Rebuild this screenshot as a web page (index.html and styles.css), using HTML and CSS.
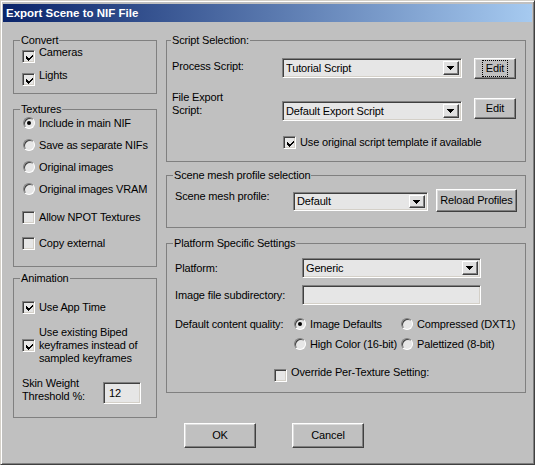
FILE: index.html
```html
<!DOCTYPE html>
<html>
<head>
<meta charset="utf-8">
<title>Export Scene to NIF File</title>
<link rel="stylesheet" href="styles.css">
</head>
<body>
<div class="window">
  <div class="titlebar"><span class="title">Export Scene to NIF File</span></div>
  <div class="content">
    <div class="col-left">
      <fieldset class="gb gb-convert">
        <legend>Convert</legend>
        <div class="gb-body pad8">
          <div class="row-top first-convert"><span class="cb on"><svg viewBox="0 0 7 7" width="7" height="7"><path d="M0 2 L2.5 4.5 L7 0 L7 2.5 L2.5 7 L0 4.5 Z"/></svg></span><span class="lbl">Cameras</span></div>
          <div class="row-top"><span class="cb on"><svg viewBox="0 0 7 7" width="7" height="7"><path d="M0 2 L2.5 4.5 L7 0 L7 2.5 L2.5 7 L0 4.5 Z"/></svg></span><span class="lbl">Lights</span></div>
        </div>
      </fieldset>
      <fieldset class="gb gb-textures">
        <legend>Textures</legend>
        <div class="gb-body pad8">
          <div class="row22 first-tex"><span class="rb on"></span><span class="lbl">Include in main NIF</span></div>
          <div class="row22"><span class="rb"></span><span class="lbl">Save as separate NIFs</span></div>
          <div class="row22"><span class="rb"></span><span class="lbl">Original images</span></div>
          <div class="row22"><span class="rb"></span><span class="lbl">Original images VRAM</span></div>
          <div class="row22 mt6"><span class="cb"></span><span class="lbl">Allow NPOT Textures</span></div>
          <div class="row22 mt4"><span class="cb"></span><span class="lbl">Copy external</span></div>
        </div>
      </fieldset>
      <fieldset class="gb gb-anim">
        <legend>Animation</legend>
        <div class="gb-body pad8">
          <div class="row22 mt11"><span class="cb on"><svg viewBox="0 0 7 7" width="7" height="7"><path d="M0 2 L2.5 4.5 L7 0 L7 2.5 L2.5 7 L0 4.5 Z"/></svg></span><span class="lbl">Use App Time</span></div>
          <div class="row-center mt8"><span class="cb on"><svg viewBox="0 0 7 7" width="7" height="7"><path d="M0 2 L2.5 4.5 L7 0 L7 2.5 L2.5 7 L0 4.5 Z"/></svg></span><span class="lbl">Use existing Biped<br>keyframes instead of<br>sampled keyframes</span></div>
          <div class="row-top mt12"><span class="lbl skin-lbl">Skin Weight<br>Threshold %:</span><span class="field skin-field">12</span></div>
        </div>
      </fieldset>
    </div>
    <div class="col-right">
      <fieldset class="gb gb-script">
        <legend class="legend-narrow">Script Selection:</legend>
        <div class="gb-body pad5">
          <div class="row-top mt11">
            <span class="lbl script-lbl mt2">Process Script:</span>
            <div class="combo w180"><span class="combo-text">Tutorial Script</span><span class="combo-btn"><svg viewBox="0 0 7 4" width="7" height="4"><path d="M0 0 H7 L3.5 4 Z"/></svg></span></div>
            <div class="btn edit focus"><span class="focus-ring">Edit</span></div>
          </div>
          <div class="row-top mt12">
            <span class="lbl script-lbl">File Export<br>Script:</span>
            <div class="combo w180 mt10"><span class="combo-text">Default Export Script</span><span class="combo-btn"><svg viewBox="0 0 7 4" width="7" height="4"><path d="M0 0 H7 L3.5 4 Z"/></svg></span></div>
            <div class="btn edit mt7">Edit</div>
          </div>
          <div class="row13 mt15 indent-tmpl"><span class="cb on"><svg viewBox="0 0 7 7" width="7" height="7"><path d="M0 2 L2.5 4.5 L7 0 L7 2.5 L2.5 7 L0 4.5 Z"/></svg></span><span class="lbl">Use original script template if available</span></div>
        </div>
      </fieldset>
      <fieldset class="gb gb-mesh">
        <legend>Scene mesh profile selection</legend>
        <div class="gb-body pad8">
          <div class="row-top mt7">
            <span class="lbl mesh-lbl mt1">Scene mesh profile:</span>
            <div class="combo w135 h19 mt3"><span class="combo-text">Default</span><span class="combo-btn"><svg viewBox="0 0 7 4" width="7" height="4"><path d="M0 0 H7 L3.5 4 Z"/></svg></span></div>
            <div class="btn reload">Reload Profiles</div>
          </div>
        </div>
      </fieldset>
      <fieldset class="gb gb-platform">
        <legend>Platform Specific Settings</legend>
        <div class="gb-body pad8">
          <div class="row-center mt8">
            <span class="lbl plat-lbl">Platform:</span>
            <div class="combo w179"><span class="combo-text">Generic</span><span class="combo-btn"><svg viewBox="0 0 7 4" width="7" height="4"><path d="M0 0 H7 L3.5 4 Z"/></svg></span></div>
          </div>
          <div class="row-center mt7">
            <span class="lbl plat-lbl">Image file subdirectory:</span>
            <span class="field w179"></span>
          </div>
          <div class="row16 mt11">
            <span class="lbl qual-lbl">Default content quality:</span>
            <span class="opt"><span class="rb on"></span><span class="lbl">Image Defaults</span></span>
            <span class="opt opt2"><span class="rb"></span><span class="lbl">Compressed (DXT1)</span></span>
          </div>
          <div class="row16 mt4">
            <span class="lbl qual-lbl"></span>
            <span class="opt"><span class="rb"></span><span class="lbl">High Color (16-bit)</span></span>
            <span class="opt opt2"><span class="rb"></span><span class="lbl">Palettized (8-bit)</span></span>
          </div>
          <div class="row-top mt17 indent-override"><span class="cb"></span><span class="lbl override-lbl">Override Per-Texture Setting:</span></div>
        </div>
      </fieldset>
    </div>
  </div>
  <div class="buttons">
    <div class="btn dlg">OK</div>
    <div class="btn dlg">Cancel</div>
  </div>
</div>
</body>
</html>
```

FILE: styles.css
```css
html, body {
  margin: 0;
  padding: 0;
  background: #c0c0c0;
}
body {
  font-family: "Liberation Sans", Arial, sans-serif;
  font-size: 11px;
  letter-spacing: -0.15px;
  color: #000;
}
.window {
  width: 535px;
  height: 465px;
  box-sizing: border-box;
  border: 1px solid;
  border-color: #d4d0c8 #404040 #404040 #d4d0c8;
  box-shadow: inset 1px 1px 0 #ffffff, inset -1px -1px 0 #808080;
  padding: 3px 2px 2px 2px;
  background: #c0c0c0;
  display: flex;
  flex-direction: column;
}
.titlebar {
  height: 18px;
  background: linear-gradient(to right, #0a246a, #a6caf0);
  display: flex;
  align-items: center;
  padding-left: 3px;
}
.title {
  color: #fff;
  font-weight: bold;
  font-size: 11.5px;
  letter-spacing: 0;
}
.content {
  display: flex;
  gap: 9px;
  padding: 12px 6px 0 10px;
}
.col-left {
  width: 144px;
  display: flex;
  flex-direction: column;
}
.col-right {
  width: 360px;
  display: flex;
  flex-direction: column;
}
.gb {
  margin: 0;
  padding: 0;
  border: 1px solid #808080;
  box-sizing: border-box;
  min-width: 0;
}
.gb legend {
  padding: 0 1px;
  margin-left: 6px;
  line-height: 13px;
  font-size: 11px;
}
.gb .legend-narrow { margin-left: 4px; }
.gb-convert { height: 60px; }
.gb-textures { height: 164px; margin-top: 9px; }
.gb-anim { height: 146px; margin-top: 5px; }
.gb-script { height: 128px; }
.gb-mesh { height: 59px; margin-top: 7px; }
.gb-platform { height: 156px; margin-top: 9px; }

.pad8 { padding-left: 8px; }
.pad5 { padding-left: 5px; }

.lbl { line-height: 13px; white-space: nowrap; }

.row-top { display: flex; align-items: flex-start; }
.row-center { display: flex; align-items: center; }
.row22 { display: flex; align-items: center; height: 22px; }
.row13 { display: flex; align-items: center; height: 13px; }
.row16 { display: flex; align-items: center; height: 16px; }

.row-top > .cb + .lbl,
.row22 > .cb + .lbl,
.row13 > .cb + .lbl,
.row-center > .cb + .lbl { margin-left: 4px; }
.row22 > .rb + .lbl { margin-left: 4px; }

.first-convert { margin-top: -1px; }
.gb-convert .row-top { height: 23px; }
.gb-convert .cb { margin-top: 4px; }
.first-tex { margin-top: -4px; }
.rb { margin-left: 1px; }

.mt1 { margin-top: 1px; }
.mt2 { margin-top: 2px; }
.mt3 { margin-top: 3px; }
.mt4 { margin-top: 4px; }
.mt6 { margin-top: 6px; }
.mt7 { margin-top: 7px; }
.mt8 { margin-top: 8px; }
.mt10 { margin-top: 10px; }
.mt11 { margin-top: 11px; }
.mt12 { margin-top: 12px; }
.mt15 { margin-top: 15px; }
.mt17 { margin-top: 17px; }

/* checkbox */
.cb {
  flex: none;
  width: 13px;
  height: 13px;
  box-sizing: border-box;
  border: 1px solid;
  border-color: #808080 #ffffff #ffffff #808080;
  box-shadow: inset 1px 1px 0 #404040, inset -1px -1px 0 #d4d0c8;
  background: #e6e6e6;
  display: flex;
  align-items: center;
  justify-content: center;
}
.cb svg { display: block; fill: #000; shape-rendering: crispEdges; margin: 1px 0 0 1px; }

/* radio */
.rb {
  flex: none;
  width: 12px;
  height: 12px;
  box-sizing: border-box;
  border-radius: 50%;
  border: 1px solid;
  border-color: #808080 #ffffff #ffffff #808080;
  box-shadow: inset 1px 1px 0 #404040;
  background: #e6e6e6;
  display: flex;
  align-items: center;
  justify-content: center;
}
.rb.on::before {
  content: "";
  width: 4px;
  height: 4px;
  border-radius: 50%;
  background: #000;
}

/* sunken edit field */
.field {
  display: block;
  box-sizing: border-box;
  height: 20px;
  border: 1px solid;
  border-color: #808080 #ffffff #ffffff #808080;
  box-shadow: inset 1px 1px 0 #404040, inset -1px -1px 0 #d4d0c8;
  background: #e6e6e6;
  padding: 3px 0 0 5px;
  line-height: 13px;
}
.w179 { width: 179px; }
.skin-lbl { width: 81px; }
.skin-field { width: 38px; height: 22px; margin-top: 5px; padding-top: 4px; }

/* combo */
.combo {
  display: flex;
  align-items: center;
  box-sizing: border-box;
  height: 20px;
  border: 1px solid;
  border-color: #808080 #ffffff #ffffff #808080;
  box-shadow: inset 1px 1px 0 #404040, inset -1px -1px 0 #d4d0c8;
  background: #e6e6e6;
  padding: 2px 2px 2px 3px;
}
.combo-text { flex: 1; line-height: 13px; white-space: nowrap; overflow: hidden; }
.combo-btn {
  flex: none;
  width: 16px;
  height: 100%;
  box-sizing: border-box;
  border: 1px solid;
  border-color: #ffffff #404040 #404040 #ffffff;
  box-shadow: inset -1px -1px 0 #808080;
  background: #e0e0e0;
  display: flex;
  align-items: center;
  justify-content: center;
}
.combo-btn svg { display: block; fill: #000; shape-rendering: crispEdges; margin-right: 1px; }
.w180 { width: 180px; }
.w179.combo { width: 179px; }
.w135 { width: 135px; }
.h19 { height: 19px; }

/* buttons */
.btn {
  box-sizing: border-box;
  border: 1px solid;
  border-color: #ffffff #404040 #404040 #ffffff;
  box-shadow: inset -1px -1px 0 #808080, inset 1px 1px 0 #dcdcdc;
  background: #c0c0c0;
  display: flex;
  align-items: center;
  justify-content: center;
  line-height: 13px;
  white-space: nowrap;
}
.edit { width: 42px; height: 21px; margin-left: 12px; }
.focus-ring { border: 1px dotted #000; padding: 1px 3px; }
.reload { width: 81px; height: 23px; margin-left: 8px; }
.dlg { width: 72px; height: 25px; }

.script-lbl { width: 110px; }
.mesh-lbl { width: 118px; }
.plat-lbl { width: 127px; }
.qual-lbl { width: 119px; height: 13px; }
.indent-tmpl { margin-left: 111px; }
.indent-override { margin-left: 99px; }
.override-lbl { margin-top: -3px; margin-left: 5px; }

.opt { display: flex; align-items: center; width: 107px; }
.opt .lbl { margin-left: 4px; }
.opt .rb { margin-left: 0; }

.buttons {
  display: flex;
  gap: 36px;
  padding-left: 181px;
  margin-top: 5px;
}
```
